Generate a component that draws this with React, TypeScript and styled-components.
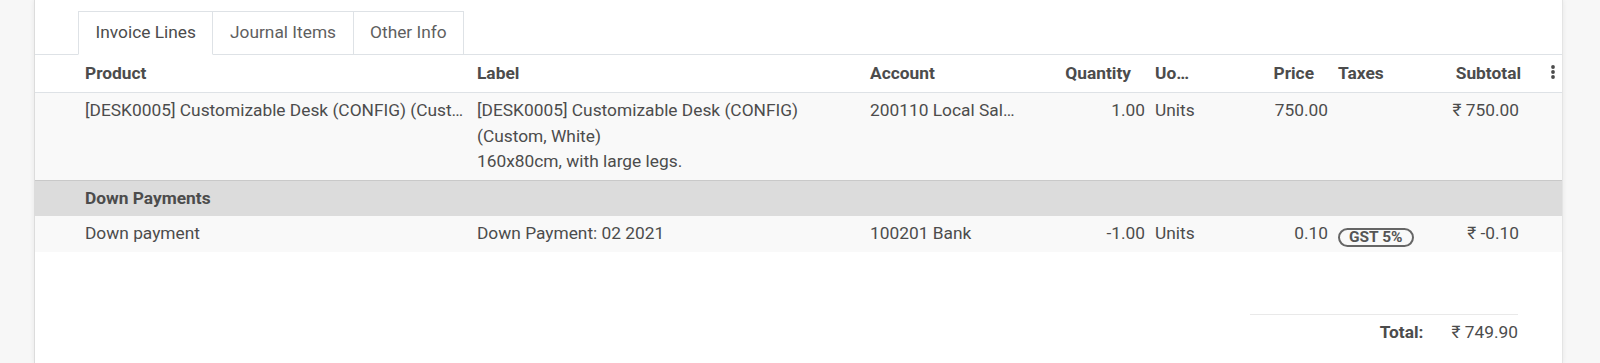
import React from "react";
import styled, { createGlobalStyle } from "styled-components";

const GlobalStyle = createGlobalStyle`
  html, body { margin: 0; padding: 0; }
  body {
    background: #f7f7f7;
    font-family: Roboto, "Noto Sans", sans-serif;
    font-size: 17.33px;
    line-height: 25.5px;
    color: #4c4c4c;
  }
`;

const Page = styled.div`
  display: flex;
  height: 363px;
  overflow: hidden;
  padding-left: 34px;
`;

const Sheet = styled.div`
  width: 1527px;
  flex: none;
  background: #fff;
  border-left: 1px solid #dcdcdc;
  border-right: 1px solid #e4e4e4;
  box-shadow: 0 0 5px rgba(0, 0, 0, 0.07);
  padding-top: 11px;
  display: flex;
  flex-direction: column;
`;

const Tabs = styled.div`
  display: flex;
  padding-left: 43px;
  border-bottom: 1px solid #dee2e6;
`;

const Tab = styled.div<{ $active?: boolean }>`
  padding: 8px 16.5px;
  border: 1px solid #dee2e6;
  border-bottom-color: ${(p) => (p.$active ? "#fff" : "#dee2e6")};
  margin-right: -1px;
  margin-bottom: -1px;
  background: #fff;
  color: ${(p) => (p.$active ? "#4c4c4c" : "#5f5f5f")};
  position: relative;
  z-index: ${(p) => (p.$active ? 1 : 0)};
`;

const Table = styled.table`
  width: 1527px;
  table-layout: fixed;
  border-collapse: collapse;
`;

const HeadCell = styled.th<{ $align?: string; $pr?: number }>`
  padding: 6px ${(p) => (p.$pr ?? 5)}px 6px 5px;
  text-align: ${(p) => p.$align ?? "left"};
  font-weight: 700;
  color: #4c4c4c;
  white-space: nowrap;
  overflow: hidden;
  text-overflow: ellipsis;
  border-bottom: 1px solid #dee2e6;
  background: #fff;
`;

const Row = styled.tr<{ $section?: boolean }>`
  background: ${(p) => (p.$section ? "#dcdcdc" : "#f9f9f9")};
  border-top: ${(p) => (p.$section ? "1px solid #c9c9c9" : "none")};
`;

const Cell = styled.td<{ $align?: string; $wrap?: boolean; $bold?: boolean }>`
  padding: 5px;
  vertical-align: top;
  text-align: ${(p) => p.$align ?? "left"};
  font-weight: ${(p) => (p.$bold ? 700 : 400)};
  white-space: ${(p) => (p.$wrap ? "pre-line" : "nowrap")};
  overflow: hidden;
  text-overflow: ellipsis;
`;

const Badge = styled.span`
  display: inline-block;
  vertical-align: -3px;
  padding: 0 9px;
  border: 2px solid #666;
  border-radius: 10px;
  font-size: 15.5px;
  line-height: 15px;
  font-weight: 700;
  color: #555;
`;

const Kebab = styled.svg`
  vertical-align: middle;
  margin-top: -3px;
`;

const TotalsWrap = styled.div`
  display: flex;
  justify-content: flex-end;
  padding-right: 44px;
  margin-top: 61.5px;
`;

const Totals = styled.div`
  width: 268px;
  border-top: 1px solid #e9e9e9;
  padding-top: 5px;
  display: flex;
  justify-content: flex-end;
  gap: 28px;
`;

const TotalLabel = styled.span`
  font-weight: 700;
`;

const cols = [45, 392, 393, 157, 128, 50, 133, 92, 99, 38];

const Rupee = (v: string) => `\u20B9\u00A0${v}`;

export default function App() {
  return (
    <>
      <GlobalStyle />
      <Page>
        <Sheet>
          <Tabs>
            <Tab $active>Invoice Lines</Tab>
            <Tab>Journal Items</Tab>
            <Tab>Other Info</Tab>
          </Tabs>
          <Table>
            <colgroup>
              {cols.map((w, i) => (
                <col key={i} style={{ width: w }} />
              ))}
            </colgroup>
            <thead>
              <tr>
                <HeadCell />
                <HeadCell>Product</HeadCell>
                <HeadCell>Label</HeadCell>
                <HeadCell>Account</HeadCell>
                <HeadCell $align="right" $pr={19}>Quantity</HeadCell>
                <HeadCell $pr={10.5}>UoM</HeadCell>
                <HeadCell $align="right" $pr={19}>Price</HeadCell>
                <HeadCell>Taxes</HeadCell>
                <HeadCell $align="right" $pr={3}>Subtotal</HeadCell>
                <HeadCell $align="right" $pr={7}>
                  <Kebab width="4" height="14" viewBox="0 0 4 14">
                    <circle cx="2" cy="2" r="1.9" fill="#4c4c4c" />
                    <circle cx="2" cy="7" r="1.9" fill="#4c4c4c" />
                    <circle cx="2" cy="12" r="1.9" fill="#4c4c4c" />
                  </Kebab>
                </HeadCell>
              </tr>
            </thead>
            <tbody>
              <Row>
                <Cell />
                <Cell>[DESK0005] Customizable Desk (CONFIG) (Custom, White)</Cell>
                <Cell $wrap>
                  {"[DESK0005] Customizable Desk (CONFIG) (Custom, White)\n160x80cm, with large legs."}
                </Cell>
                <Cell>200110 Local Sales</Cell>
                <Cell $align="right">1.00</Cell>
                <Cell>Units</Cell>
                <Cell $align="right">750.00</Cell>
                <Cell />
                <Cell $align="right">{Rupee("750.00")}</Cell>
                <Cell />
              </Row>
              <Row $section>
                <Cell />
                <Cell $bold colSpan={8}>Down Payments</Cell>
                <Cell />
              </Row>
              <Row>
                <Cell />
                <Cell>Down payment</Cell>
                <Cell>Down Payment: 02 2021</Cell>
                <Cell>100201 Bank</Cell>
                <Cell $align="right">-1.00</Cell>
                <Cell>Units</Cell>
                <Cell $align="right">0.10</Cell>
                <Cell>
                  <Badge>GST 5%</Badge>
                </Cell>
                <Cell $align="right">{Rupee("-0.10")}</Cell>
                <Cell />
              </Row>
            </tbody>
          </Table>
          <TotalsWrap>
            <Totals>
              <TotalLabel>Total:</TotalLabel>
              <span>{Rupee("749.90")}</span>
            </Totals>
          </TotalsWrap>
        </Sheet>
      </Page>
    </>
  );
}
